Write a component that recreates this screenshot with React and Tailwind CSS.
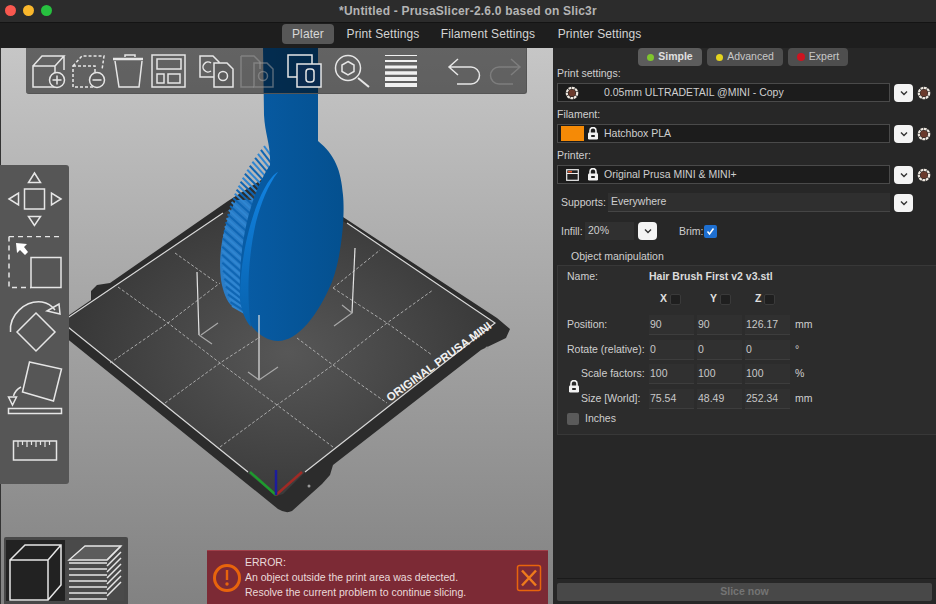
import React from 'react';

const FONT = { fontFamily: '"Liberation Sans", Arial, sans-serif' };

function Cog() {
  return (
    <svg width="14" height="14" viewBox="0 0 14 14" className="shrink-0">
      <circle cx="7" cy="7" r="5.2" fill="none" stroke="#efe8e0" strokeWidth="2.2" strokeDasharray="2.800 .6" />
      <circle cx="7" cy="7" r="3.600" fill="#6a3a2c" />
    </svg>
  );
}
function Lock({ className = '' }) {
  return (
    <svg width="12" height="13" viewBox="0 0 12 13" className={'shrink-0 ' + className}>
      <path d="M3 6V3.6a3 3 0 0 1 6 0V6" fill="none" stroke="#f2f2f2" strokeWidth="1.6" />
      <rect x="1" y="5.5" width="10" height="7" rx="1.2" fill="#f2f2f2" />
      <rect x="4.2" y="8" width="3.6" height="2" fill="#222" />
    </svg>
  );
}
function Chevron() {
  return (
    <div className="w-[19px] h-[18px] shrink-0 rounded-[4px] bg-[#f4f4f4] flex items-center justify-center">
      <svg width="8" height="6" viewBox="0 0 8 6"><path d="M1 1.5 4 4.5 7 1.5" fill="none" stroke="#333" strokeWidth="1.4" /></svg>
    </div>
  );
}
function Preset({ label, children }) {
  return (
    <div className="mb-[5px]">
      <div className="h-[17px] text-[10.5px] leading-[14px] text-[#d0d0d0]">{label}</div>
      <div className="flex items-center h-[19px]">
        <div className="h-[19px] w-[333px] shrink-0 flex items-center border border-[#4a4a4a] bg-[#1c1c1c] text-[10.5px] text-[#cfcfcf]">
          {children}
        </div>
        <div className="ml-[4px]"><Chevron /></div>
        <div className="ml-[4px]"><Cog /></div>
      </div>
    </div>
  );
}
function Field({ v }) {
  return (
    <div className="w-[45px] h-[20px] flex items-center pl-[1px] bg-[#303030] border-b border-[#3d3d3d] text-[10.5px] text-[#c8c8c8]">{v}</div>
  );
}
function Row({ label, vals, unit, className = '', labelW = 'w-[91px] pl-[9px]' }) {
  return (
    <div className={'flex items-center h-[20px] ' + className}>
      <div className={'shrink-0 text-[10.5px] text-[#cfcfcf] whitespace-nowrap ' + labelW}>{label}</div>
      <div className="flex gap-[3px]">
        {vals.map((v, i) => <Field key={i} v={v} />)}
      </div>
      <div className="ml-[5px] text-[10.5px] text-[#cfcfcf]">{unit}</div>
    </div>
  );
}
function Axis({ l, w }) {
  return (
    <div className={'flex items-center gap-[3px] ' + w}>
      <span className="text-[10.5px] font-bold text-[#e0e0e0]">{l}</span>
      <span className="w-[11px] h-[11px] rounded-[2px] bg-[#1f1f1f] border border-[#3a3a3a]" />
    </div>
  );
}

const S = { fill: 'none', stroke: '#e6e6e6', strokeWidth: 1.5 };

const topIcons = [
  [26, 40, <g {...S}><path d="M33 66h22v21H33zM33 66l9-10h22l-9 10M64 56v14M55 72v-6" /><circle cx="57" cy="80" r="7.5" fill="#5c5c5c" /><path d="M52.500 80h9M57 75.500v9" /></g>],
  [66, 40, <g {...S} strokeDasharray="3 2"><path d="M73 66h22v21H73zM73 66l9-10h22l-2 14" /><circle cx="97" cy="80" r="7.500" fill="#5c5c5c" strokeDasharray="none" /><path d="M92.500 80h9" strokeDasharray="none" /></g>],
  [106, 42, <g {...S}><path d="M115 61l4 26h20l3-26" /><path d="M113 59h30" strokeWidth="2.500" /><path d="M125 57v-2h10v2" /></g>],
  [148, 47, <g {...S}><rect x="152" y="55" width="33" height="32" /><rect x="157" y="59" width="24" height="10" /><rect x="157" y="74" width="7" height="9" /><rect x="168" y="74" width="12" height="9" /></g>],
  [195, 42, <g {...S}><path d="M200 56h13l6 6v15h-19z" /><path d="M211 63a5 5 0 1 0 0 8" /><path d="M214 63h13l6 6v18h-19z" fill="#5c5c5c" /><circle cx="223" cy="76" r="4.500" /></g>],
  [237, 45, <g fill="none" stroke="#9a9a9a" strokeOpacity=".55" strokeWidth="1.500"><path d="M241 56h13l6 6v7M241 56v31h13" /><path d="M254 63h13l6 6v18h-19z" /><circle cx="263" cy="76" r="4.500" /></g>],
  [282, 48, <g {...S}><rect x="288" y="55" width="24" height="22" /><rect x="297" y="64" width="24" height="23" fill="#0a2a4e" /><rect x="306" y="69" width="8" height="13" rx="3" /></g>],
  [330, 48, <g {...S}><circle cx="348" cy="68" r="12.500" /><path d="M348 61.500l6 3.500v6.500l-6 3.500-6-3.500V65z" /><path d="M358 78l11 9" strokeWidth="2" /></g>],
  [378, 62, <g stroke="#f0f0f0"><path d="M385 55.500h32" strokeWidth="1" /><path d="M385 61h32" strokeWidth="2" /><path d="M385 67h32" strokeWidth="3" /><path d="M385 73h32" strokeWidth="3.500" /><path d="M385 79h32" strokeWidth="4" /><path d="M385 85h32" strokeWidth="4" /></g>],
  [440, 46, <g {...S}><path d="M458 59l-9 8 9 8M449 67h22a8.500 8.500 0 0 1 0 17h-14" /></g>],
  [486, 41, <g fill="none" stroke="#9a9a9a" strokeOpacity=".5" strokeWidth="1.500"><path d="M511 59l9 8-9 8M520 67h-21a8 8 0 0 0 0 17h14" /></g>],
];

const leftIcons = [
  [165, 71, <g {...S}><rect x="24.500" y="189" width="20" height="20" /><path d="M34.500 173l-6 9.500h12zM9 199l9.500-6v12zM61 199l-9.500-6v12zM34.500 225.500l-6-9h12z" /></g>],
  [236, 56, <g {...S}><path d="M9 236.500h53M9 236.500v51h22" strokeDasharray="5 4" /><rect x="31" y="257.500" width="30" height="30" /><path d="M16 243l11 1-3 3 4 5-3 3-5-5-3 3z" fill="#fff" stroke="none" /></g>],
  [292, 64, <g {...S}><path d="M36 313l19 19-19 19-19-19z" /><path d="M10.500 332C9 315 25 300 42 302c6 1 10 4 13 8" /><path d="M47 311l12-7 1 10z" /></g>],
  [356, 64, <g {...S}><path d="M29.500 362l32 7-8 32-31-9z" /><path d="M21 387c-4 2-6 4-7.500 9" /><path d="M8.500 397h8l-4 8z" /><rect x="8.500" y="408.500" width="53" height="5" /></g>],
  [420, 64, <g {...S}><rect x="13.500" y="441" width="43" height="19" /><path d="M18 441v6M22.500 441v4M27 441v6M31.500 441v4M36 441v6M40.500 441v4M45 441v6M49.500 441v4" strokeWidth="1.200" /></g>],
];

function Bristles() {
  const pts = [];
  const bez = (p, t) => {
    const u = 1 - t;
    return u * u * u * p[0] + 3 * u * u * t * p[1] + 3 * u * t * t * p[2] + t * t * t * p[3];
  };
  for (let i = 0; i <= 40; i++) {
    const t = i / 40;
    pts.push([
      bez([280, 248, 234, 246], t), bez([168, 215, 280, 314], t),
      bez([264, 222, 212, 232], t), bez([146, 198, 255, 306], t),
    ]);
  }
  return (
    <g>
      <path d="M236 200C226 218 217 250 221 280 223 292 227 302 232 306L246 312 244 260 256 200z" fill="#2a7cc6" />
      {pts.map((p, i) => (
        <line key={i} x1={p[0]} y1={p[1]} x2={p[2]} y2={p[3]} stroke={i % 2 ? '#0f66b4' : '#2f86d2'} strokeWidth="2" />
      ))}
    </g>
  );
}

function Scene() {
  const dash = { fill: 'none', stroke: '#ababab', strokeWidth: 1, strokeDasharray: '3 2' };
  return (
    <svg className="block w-[553px] h-[556px]" viewBox="0 48 553 556">
      <defs>
        <radialGradient id="bedg" cx="52%" cy="55%" r="50%">
          <stop offset="0" stopColor="#575757" />
          <stop offset="1" stopColor="#383838" />
        </radialGradient>
        <linearGradient id="faceg" x1="0" y1="0" x2="1" y2="0">
          <stop offset="0" stopColor="#085ca5" />
          <stop offset="1" stopColor="#04508f" />
        </linearGradient>
        <linearGradient id="stripg" x1="0" y1="0" x2="0" y2="1">
          <stop offset="0" stopColor="#1183e2" />
          <stop offset="1" stopColor="#0862ad" />
        </linearGradient>
      </defs>
      <path d="M59 322L91 300V291L97 285 110 283 228 201 277 170 343 217 497 318 510 329 506 338 481 350 333 465 330 475 322 484 292 511Q286 514 278 509L60 333z" fill="#2c2c2c" />
      <path d="M63 322L277 177 495 323 305 472 283 494 276 496z" fill="url(#bedg)" />
      <path d="M63 321L223 213M347 223L495 323 305 472M63 323L248 472" fill="none" stroke="#d8d8d8" strokeWidth="1.200" />
      <path d="M118 287L168 323 220 363 277 405 333 447M175 253L217 283M297 338L333 365 387 403M333 288L387 323 432 355" {...dash} />
      <path d="M110 363L168 323 220 283M165 403L220 363 260 337M333 288L380 250M220 447L277 405 333 365 387 323 433 290" {...dash} />
      <text x="390" y="402" transform="rotate(-36 390 402)" fontSize="11.500" fontWeight="700" fill="#f0f0f0" style={FONT}>ORIGINAL PRUSA MINI</text>
      <circle cx="487" cy="348" r="1.500" fill="#999" />
      <circle cx="309" cy="486" r="1.500" fill="#999" />

      <Bristles />
      <path d="M263 48L264 115C265 135 271 145 270 165 250 195 238 245 240 298 243 320 258 340 278 341 298 341 318 315 332 282 342 255 345 215 343 195 341 170 335 155 318 141L318 48z" fill="url(#faceg)" />
      <path d="M278 172C262 180 240 240 240 298 241 310 245 320 251 327 247 300 247 262 256 222 261 203 268 185 278 172z" fill="url(#stripg)" />

      <g fill="none" stroke="#e2e2e2" strokeWidth="1.200">
        <path d="M197 272L199 335" />
        <path d="M259 315V379" />
        <path d="M355 248L352 313" />
      </g>
      <g fill="none" stroke="#a8a8a8" strokeWidth="1.200">
        <path d="M199 335L212 344M201 335L218 323" />
        <path d="M248 372L259 380 278 367" />
        <path d="M342 305L352 313 334 326" />
      </g>
      <path d="M276 495L250 472" stroke="#1e9a2e" strokeWidth="2.500" />
      <path d="M276 495L302 472" stroke="#a02a25" strokeWidth="2.500" />
      <path d="M276 495V470" stroke="#1c1c9c" strokeWidth="2.500" />
    </svg>
  );
}

export default function App() {
  return (
    <div className="w-[936px] h-[604px] overflow-hidden flex flex-col bg-[#272727]" style={FONT}>
      <div className="relative h-[23px] shrink-0 bg-[#2c2c2c] border-b border-[#141414] flex items-center justify-center">
        <div className="absolute left-[5px] top-[5px] flex gap-[7px]">
          <span className="w-[11px] h-[11px] rounded-full bg-[#f9584f]" />
          <span className="w-[11px] h-[11px] rounded-full bg-[#f9b72c]" />
          <span className="w-[11px] h-[11px] rounded-full bg-[#27c13f]" />
        </div>
        <div className="text-[12px] font-bold text-[#b4b4b4] tracking-[0.2px]">*Untitled - PrusaSlicer-2.6.0 based on Slic3r</div>
      </div>
      <div className="h-[25px] shrink-0 bg-[#1e1e1e] flex items-start pl-[282px] pt-[1px] text-[12px] tracking-[0.1px] text-[#d4d4d4] whitespace-nowrap">
        <div className="w-[52px] h-[20px] rounded-[4px] bg-[#575757] flex items-center justify-center text-[#d8d8d8]">Plater</div>
        <div className="ml-[12px] w-[74px] h-[20px] flex items-center justify-center">Print Settings</div>
        <div className="ml-[20px] w-[96px] h-[20px] flex items-center justify-center">Filament Settings</div>
        <div className="ml-[21px] w-[85px] h-[20px] flex items-center justify-center">Printer Settings</div>
      </div>

      <div className="flex-1 flex min-h-0">
        <div className="relative w-[553px] shrink-0 bg-gradient-to-b from-[#c6c6c6] to-[#828282] border-l border-[#333]">
          <div className="absolute -left-[1px] top-0"><Scene /></div>

          <div className="absolute left-[25px] top-0 w-[501px] h-[46px] rounded-b-[3px] bg-black/50 border-r border-b border-[#555] flex">
            {topIcons.map(([x, w, g], i) => (
              <svg key={i} width={w} height="46" viewBox={`${x} 48 ${w} 46`} className="shrink-0">{g}</svg>
            ))}
          </div>

          <div className="absolute -left-[1px] top-[117px] w-[69px] h-[319px] rounded-r-[3px] bg-[#565656] flex flex-col">
            {leftIcons.map(([y, h, g], i) => (
              <svg key={i} width="69" height={h} viewBox={`0 ${y} 69 ${h}`} className="shrink-0">{g}</svg>
            ))}
          </div>

          <div className="absolute left-[3px] bottom-0 w-[124px] h-[67px] rounded-t-[2px] bg-[#484848] flex items-start pt-[3px] pl-[2px]">
            <div className="w-[59px] h-[61px] bg-[#222] flex items-center justify-center">
              <svg width="59" height="61" viewBox="5 540 59 61"><path d="M9 560h38v40H9zM9 560l15-15h36v40l-13 15M47 560l13-15" fill="none" stroke="#e6e6e6" strokeWidth="1.500" /></svg>
            </div>
            <svg width="59" height="61" viewBox="64 540 59 61" className="shrink-0 bg-[#4a4a4a]">
              <path d="M68 560l16-14h36l-14 14z" fill="#5c5c5c" stroke="#e6e6e6" strokeWidth="1.300" />
              <g stroke="#e6e6e6" strokeWidth="1.500">
                <path d="M68 563h38M68 569h38M68 575h38M68 581h38M68 587h38M68 593h38M68 599h38" />
                <path d="M106 560l14-14M106 566l14-14M106 572l14-14M106 578l14-14M106 584l14-14M106 590l14-14M106 596l14-14" />
              </g>
            </svg>
          </div>

          <div className="absolute left-[206px] bottom-0 w-[341px] h-[54px] bg-[#7c2a35] border-t border-[#a0404a] flex items-center">
            <svg width="38" height="38" viewBox="0 0 38 38" className="ml-[1px] shrink-0">
              <circle cx="19" cy="19" r="12.500" fill="none" stroke="#e8640c" strokeWidth="3" />
              <rect x="17.800" y="11" width="2.400" height="10" fill="#e8640c" />
              <circle cx="19" cy="25" r="1.700" fill="#e8640c" />
            </svg>
            <div className="ml-[-1px] flex-1 text-[10.5px] leading-[14.7px] text-[#eadada] whitespace-nowrap">
              <div>ERROR:</div>
              <div>An object outside the print area was detected.</div>
              <div>Resolve the current problem to continue slicing.</div>
            </div>
            <svg width="26" height="28" viewBox="0 0 26 28" className="mr-[6px] shrink-0">
              <rect x="1.500" y="1.500" width="23" height="25" rx="2" fill="none" stroke="#e8640c" strokeWidth="1.500" />
              <path d="M6 6.500l14 15M20 6.500L6 21.500" stroke="#ee7a1c" strokeWidth="2.500" />
            </svg>
          </div>
        </div>

        <div className="flex-1 flex flex-col min-w-0 pl-[4px]">
          <div className="h-[18px] shrink-0 flex pl-[81px] gap-[5px] text-[10.5px]">
            <div className="w-[64px] rounded-[4px] bg-[#5c5c5c] flex items-center justify-center gap-[4px] font-bold text-[#e0e0e0]"><span className="w-[7px] h-[7px] rounded-full bg-[#7fc62e]" />Simple</div>
            <div className="w-[76px] rounded-[4px] bg-[#4e4e4e] flex items-center justify-center gap-[4px] text-[#c8c8c8]"><span className="w-[7px] h-[7px] rounded-full bg-[#e4d41e]" />Advanced</div>
            <div className="w-[60px] rounded-[4px] bg-[#4e4e4e] flex items-center justify-center gap-[4px] text-[#c8c8c8]"><span className="w-[8px] h-[8px] rounded-full bg-[#cc1420]" />Expert</div>
          </div>

          <Preset label="Print settings:">
            <div className="ml-[7px]"><Cog /></div>
            <span className="ml-[25px]">0.05mm ULTRADETAIL @MINI - Copy</span>
          </Preset>
          <Preset label="Filament:">
            <span className="ml-[3px] w-[23px] h-[15px] bg-[#f58a06]" />
            <Lock className="ml-[3px]" />
            <span className="ml-[5px]">Hatchbox PLA</span>
          </Preset>
          <Preset label="Printer:">
            <svg width="13" height="12" viewBox="0 0 13 12" className="ml-[8px] shrink-0">
              <rect x=".7" y=".7" width="11.600" height="10.600" fill="#222" stroke="#eee" strokeWidth="1.200" />
              <path d="M1 4.500h11" stroke="#eee" />
              <rect x="2" y="2" width="4" height="1.500" fill="#e0552a" />
            </svg>
            <Lock className="ml-[8px]" />
            <span className="ml-[5px]">Original Prusa MINI &amp; MINI+</span>
          </Preset>

          <div className="mt-[4px] h-[19px] shrink-0 flex items-center pl-[4px]">
            <span className="w-[47px] pt-[1px] text-[10.5px] text-[#cfcfcf]">Supports:</span>
            <div className="w-[282px] h-[19px] flex items-center pl-[3px] bg-[#2f2f2f] border-b border-[#454545] text-[10.5px] text-[#cfcfcf]">Everywhere</div>
            <div className="ml-[4px]"><Chevron /></div>
          </div>

          <div className="mt-[10px] h-[18px] shrink-0 flex items-center pl-[4px] text-[10.5px] text-[#cfcfcf]">
            <span className="w-[24px] pt-[1px]">Infill:</span>
            <div className="w-[49px] h-[18px] flex items-center pl-[3px] bg-[#303030]">20%</div>
            <div className="ml-[4px]"><Chevron /></div>
            <span className="ml-[22px] w-[25px] pt-[1px]">Brim:</span>
            <span className="w-[13px] h-[13px] rounded-[2px] bg-[#1e6fd0] flex items-center justify-center">
              <svg width="9" height="9" viewBox="0 0 9 9"><path d="M1.500 4.500l2 2.500 4-5.500" fill="none" stroke="#fff" strokeWidth="1.500" /></svg>
            </span>
          </div>

          <div className="mt-[10px] h-[15px] shrink-0 pl-[14px] text-[10.5px] leading-[12px] text-[#cfcfcf]">Object manipulation</div>

          <div className="h-[170px] shrink-0 bg-[#2c2c2c] border-t border-l border-b border-[#383838] pt-[4px]">
            <div className="h-[14px] flex items-center text-[10.5px]">
              <span className="w-[91px] pl-[9px] text-[#cfcfcf]">Name:</span>
              <span className="font-bold text-[#dcdcdc]">Hair Brush First v2 v3.stl</span>
            </div>
            <div className="mt-[8px] h-[14px] flex items-center pl-[102px]">
              <Axis l="X" w="w-[50px]" />
              <Axis l="Y" w="w-[45px]" />
              <Axis l="Z" w="w-[40px]" />
            </div>
            <Row className="mt-[9px]" label="Position:" vals={['90', '90', '126.17']} unit="mm" />
            <Row className="mt-[5px]" label="Rotate (relative):" vals={['0', '0', '0']} unit="°" />
            <div className="mt-[4px] flex items-center pl-[10px]">
              <Lock />
              <div className="flex flex-col gap-[5px]">
                <Row label="Scale factors:" vals={['100', '100', '100']} unit="%" labelW="w-[69px] pl-[1px]" />
                <Row label="Size [World]:" vals={['75.54', '48.49', '252.34']} unit="mm" labelW="w-[69px] pl-[1px]" />
              </div>
            </div>
            <div className="mt-[4px] h-[12px] flex items-center pl-[9px] text-[10.5px] text-[#cfcfcf]">
              <span className="w-[12px] h-[12px] rounded-[2px] bg-[#5a5a5a]" />
              <span className="ml-[6px]">Inches</span>
            </div>
          </div>

          <div className="flex-1" />
          <div className="h-[5px] shrink-0 border-t border-[#1a1a1a]" />
          <div className="h-[18px] w-[375px] mb-[3px] shrink-0 rounded-[2px] bg-[#484848] flex items-center justify-center text-[10.5px] font-bold text-[#747474]">Slice now</div>
        </div>
      </div>
    </div>
  );
}
